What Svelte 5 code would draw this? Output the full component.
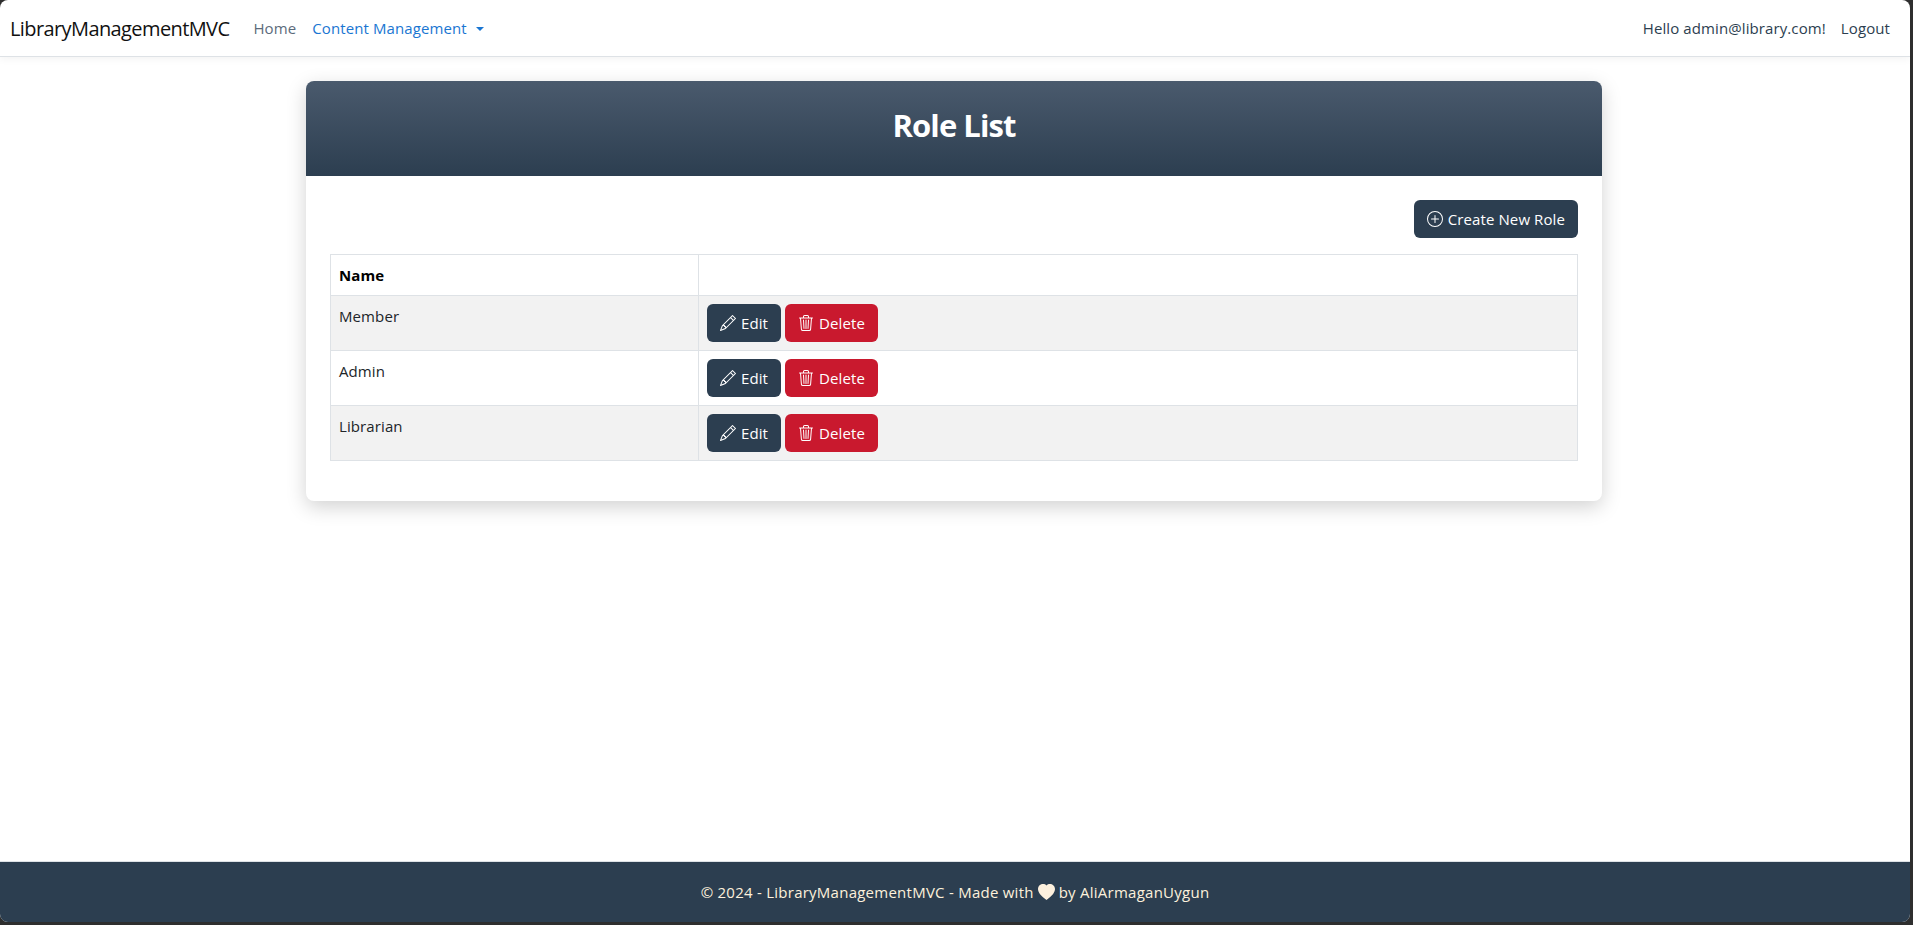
<script>
  const roles = ["Member", "Admin", "Librarian"];
</script>

<div class="frame">
  <div class="page">
    <nav class="navbar">
      <a class="brand" href="#top">LibraryManagementMVC</a>
      <ul class="links">
        <li><a class="home" href="#top">Home</a></li>
        <li><a class="active" href="#top">Content Management<span class="caret"></span></a></li>
      </ul>
      <div class="user">
        <span>Hello admin@library.com!</span>
        <a href="#top">Logout</a>
      </div>
    </nav>

    <main>
      <section class="card">
        <header class="card-header">
          <h2>Role List</h2>
        </header>
        <div class="card-body">
          <div class="actions">
            <button type="button" class="btn dark">
              <svg width="16" height="16" viewBox="0 0 16 16" fill="currentColor" aria-hidden="true">
                <path d="M8 15A7 7 0 1 1 8 1a7 7 0 0 1 0 14m0 1A8 8 0 1 0 8 0a8 8 0 0 0 0 16"/>
                <path d="M8 4a.5.5 0 0 1 .5.5v3h3a.5.5 0 0 1 0 1h-3v3a.5.5 0 0 1-1 0v-3h-3a.5.5 0 0 1 0-1h3v-3A.5.5 0 0 1 8 4"/>
              </svg>
              Create New Role
            </button>
          </div>
          <table>
            <thead>
              <tr>
                <th class="name-col">Name</th>
                <th></th>
              </tr>
            </thead>
            <tbody>
              {#each roles as role}
                <tr>
                  <td>{role}</td>
                  <td>
                    <div class="row-actions">
                      <button type="button" class="btn dark">
                        <svg width="16" height="16" viewBox="0 0 16 16" fill="currentColor" aria-hidden="true">
                          <path d="M12.146.146a.5.5 0 0 1 .708 0l3 3a.5.5 0 0 1 0 .708l-10 10a.5.5 0 0 1-.168.11l-5 2a.5.5 0 0 1-.65-.65l2-5a.5.5 0 0 1 .11-.168zM11.207 2.5 13.5 4.793 14.793 3.5 12.5 1.207zm1.586 3L10.5 3.207 4 9.707V10h.5a.5.5 0 0 1 .5.5v.5h.5a.5.5 0 0 1 .5.5v.5h.293zm-9.761 5.175-.106.106-1.528 3.821 3.821-1.528.106-.106A.5.5 0 0 1 5 12.5V12h-.5a.5.5 0 0 1-.5-.5V11h-.5a.5.5 0 0 1-.468-.325"/>
                        </svg>
                        Edit
                      </button>
                      <button type="button" class="btn red">
                        <svg width="16" height="16" viewBox="0 0 16 16" fill="currentColor" aria-hidden="true">
                          <path d="M6.5 1h3a.5.5 0 0 1 .5.5v1H6v-1a.5.5 0 0 1 .5-.5M11 2.5v-1A1.5 1.5 0 0 0 9.5 0h-3A1.5 1.5 0 0 0 5 1.5v1H1.5a.5.5 0 0 0 0 1h.538l.853 10.66A2 2 0 0 0 4.885 16h6.23a2 2 0 0 0 1.994-1.84l.853-10.66h.538a.5.5 0 0 0 0-1zm1.958 1-.846 10.58a1 1 0 0 1-.997.92h-6.23a1 1 0 0 1-.997-.92L3.042 3.5zm-7.487 1a.5.5 0 0 1 .528.47l.5 8.5a.5.5 0 0 1-.998.06L5 5.03a.5.5 0 0 1 .47-.53Zm5.058 0a.5.5 0 0 1 .47.53l-.5 8.5a.5.5 0 1 1-.998-.06l.5-8.5a.5.5 0 0 1 .528-.47M8 4.5a.5.5 0 0 1 .5.5v8.5a.5.5 0 0 1-1 0V5a.5.5 0 0 1 .5-.5"/>
                        </svg>
                        Delete
                      </button>
                    </div>
                  </td>
                </tr>
              {/each}
            </tbody>
          </table>
        </div>
      </section>
    </main>

    <footer>
      © 2024 - LibraryManagementMVC - Made with
      <svg class="heart" width="17" height="17" viewBox="0 0 16 16" fill="currentColor" aria-hidden="true">
        <path fill-rule="evenodd" d="M8 1.314C12.438-3.248 23.534 4.735 8 15-7.534 4.736 3.562-3.248 8 1.314"/>
      </svg>
      by AliArmaganUygun
    </footer>
  </div>
</div>

<style>
  :global(body) {
    margin: 0;
    background: #2e2e2e;
    font-family: "Open Sans", "Noto Sans", sans-serif;
    font-size: 15px;
    letter-spacing: 0.1px;
    color: #212529;
  }

  .frame {
    height: 925px;
    padding: 0 3px 3px 0;
    box-sizing: border-box;
    overflow: hidden;
  }

  .page {
    height: 100%;
    display: flex;
    flex-direction: column;
    background: #fff;
    border-radius: 8px;
    overflow: hidden;
  }

  a {
    text-decoration: none;
    color: inherit;
  }

  .navbar {
    height: 57px;
    box-sizing: border-box;
    flex: none;
    display: flex;
    align-items: center;
    padding: 0 20px 0 10px;
    border-bottom: 1px solid #dee2e6;
    box-shadow: 0 2px 8px rgba(0, 0, 0, 0.05);
    color: #2c3e50;
  }

  .brand {
    font-size: 20px;
    letter-spacing: -0.6px;
    color: #111;
    margin-right: 24px;
  }

  .links {
    display: flex;
    gap: 16px;
    list-style: none;
    margin: 0;
    padding: 0;
  }

  .home {
    color: #5c6b7b;
  }

  .active {
    color: #1a76d2;
  }

  .caret {
    display: inline-block;
    margin-left: 9px;
    vertical-align: 3px;
    border-top: 4.5px solid currentColor;
    border-left: 4.5px solid transparent;
    border-right: 4.5px solid transparent;
  }

  .user {
    margin-left: auto;
    display: flex;
    gap: 15px;
  }

  main {
    flex: 1;
    display: flex;
    justify-content: center;
    align-items: flex-start;
    padding: 24px 2px 0 0;
  }

  .card {
    width: 1296px;
    border-radius: 8px;
    background: #fff;
    box-shadow: 0 6px 20px rgba(0, 0, 0, 0.18);
    overflow: hidden;
  }

  .card-header {
    height: 95px;
    box-sizing: border-box;
    padding-bottom: 7px;
    display: flex;
    align-items: center;
    justify-content: center;
    background: linear-gradient(180deg, #4a5a6d, #2c3e50);
    color: #fff;
  }

  h2 {
    margin: 0;
    font-size: 31px;
    font-weight: 700;
    letter-spacing: -0.95px;
  }

  .card-body {
    padding: 24px 24px 40px;
  }

  .actions {
    display: flex;
    justify-content: flex-end;
    margin-bottom: 16px;
  }

  .btn {
    display: inline-flex;
    align-items: center;
    gap: 5px;
    height: 38px;
    padding: 0 13px;
    border: 0;
    border-radius: 6px;
    color: #fff;
    font: inherit;
    letter-spacing: inherit;
  }

  .dark {
    background: #2c3e50;
  }

  .red {
    background: #c9192e;
  }

  table {
    width: 100%;
    border-collapse: collapse;
  }

  th,
  td {
    border: 1px solid #dee2e6;
    padding: 8px;
    text-align: left;
    vertical-align: top;
    line-height: 24px;
  }

  .name-col {
    width: 351px;
    font-weight: 700;
    color: #000;
  }

  tbody tr:nth-child(odd) {
    background: #f2f2f2;
  }

  .row-actions {
    display: flex;
    gap: 4px;
  }

  footer {
    height: 61px;
    flex: none;
    display: flex;
    align-items: center;
    justify-content: center;
    gap: 4px;
    background: #2c3e50;
    border-top: 1px solid #dee2e6;
    box-sizing: border-box;
    color: #fdf1dc;
    letter-spacing: 0.25px;
  }

  .heart {
    color: #fdf0dd;
  }
</style>
